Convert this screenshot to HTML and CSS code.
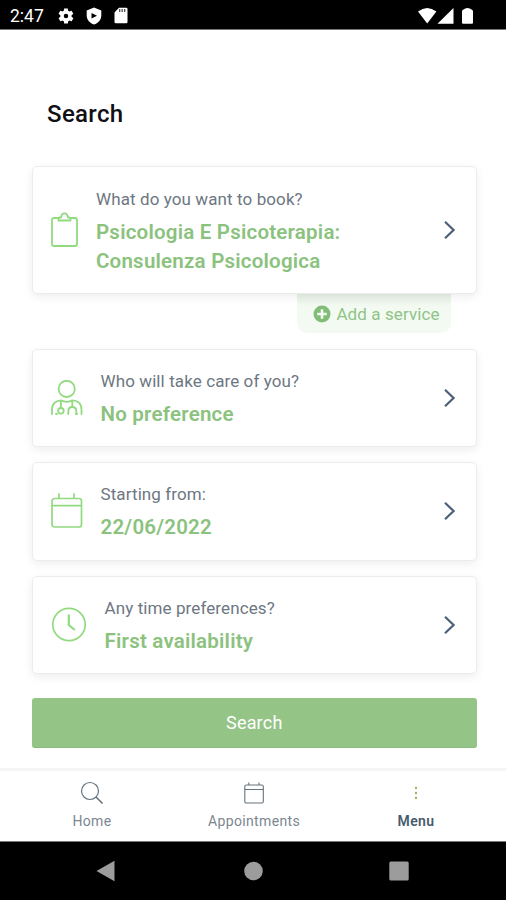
FILE: index.html
```html
<!DOCTYPE html>
<html lang="en">
<head>
<meta charset="utf-8">
<title>Search</title>
<link rel="stylesheet" href="styles.css">
</head>
<body>
<div class="phone">
  <header class="status">
    <span class="clock">2:47</span>
    <svg class="s-gear" width="18" height="18" viewBox="0 0 24 24"><path fill="#fff" fill-rule="evenodd" d="M19.4 13a7.500 7.500 0 0 0 0-2l2.100-1.600c.2-.2.3-.4.1-.7l-2-3.400c-.1-.2-.4-.3-.6-.2l-2.500 1a7 7 0 0 0-1.700-1L14.400 2.400c0-.2-.2-.4-.5-.4h-4c-.2 0-.4.2-.5.4L9 5.100a8 8 0 0 0-1.700 1l-2.500-1c-.2-.1-.5 0-.6.2l-2 3.400c-.1.3-.1.500.1.7L4.500 11a7.500 7.500 0 0 0 0 2l-2.100 1.600c-.2.2-.3.500-.1.700l2 3.400c.1.200.4.300.6.200l2.500-1a7 7 0 0 0 1.700 1l.4 2.700c0 .2.200.4.500.4h4c.2 0 .5-.2.500-.4l.4-2.700a8 8 0 0 0 1.700-1l2.500 1c.2.100.5 0 .6-.2l2-3.400c.1-.2.1-.5-.1-.7zM12 15a3 3 0 1 1 0-6 3 3 0 0 1 0 6z"/></svg>
    <svg class="s-shield" width="16" height="18" viewBox="0 0 16 18"><path fill="#fff" d="M8 .5 15.300 3.400V8.500C15.300 12.800 12 16.300 8 17.500 4 16.300.7 12.800.7 8.500V3.400z"/><path d="M5.500 6 11 8.700 5.500 11.400z"/></svg>
    <svg class="s-card" width="14" height="17" viewBox="0 0 14 17"><path fill="#fff" d="M5 .8h7.200q1.300 0 1.300 1.300v12.800q0 1.300-1.300 1.300H1.800Q.5 16.200.5 14.900V5.500z"/><path stroke="#555" stroke-width="1.300" d="M5.700 2v3M8.200 2v3M10.700 2v3"/></svg>
    <span class="grow"></span>
    <svg class="s-net" width="56" height="18" viewBox="0 0 56 18"><g fill="#fff"><path d="M0 4.500Q9.200-2.500 18.400 4.500L9.200 16.500z"/><path d="M35.500 1v15.800H19.500z"/><path d="M44 4.500q0-1.500 1.500-2Q47 1 49.500 1T53.500 2.500q1.500.5 1.500 2v11.200q0 1-1 1h-9q-1 0-1-1z"/></g></svg>
  </header>

  <main class="content">
    <h1 class="title">Search</h1>

    <section class="card card-tall">
      <svg class="icon" width="28" height="36" viewBox="0 0 28 36"><g fill="none" stroke="#92da80" stroke-width="1.800" stroke-linejoin="round"><path d="M7 6H3Q1 6 1 8v24q0 2 2 2h21q2 0 2-2V8q0-2-2-2h-4"/><path d="M7.500 8.500V6.500q0-1 1-1h1.700C10.500 0 16.500 0 16.800 5.500h1.700q1 0 1 1v2z"/></g></svg>
      <div class="text text-1">
        <p class="label">What do you want to book?</p>
        <p class="value">Psicologia E Psicoterapia:<br>Consulenza Psicologica</p>
      </div>
      <svg class="chevron" width="13" height="20" viewBox="0 0 13 20"><path d="M2 1.800 10.600 10 2 18.200"/></svg>
    </section>
    <div class="add">
      <svg width="18" height="18" viewBox="0 0 18 18"><circle cx="9" cy="9" r="8.500" fill="#82bd78"/><path d="M9 4.200v9.600M4.200 9h9.600" stroke="#f4faf3" stroke-width="2.600"/></svg>
      <span>Add a service</span>
    </div>

    <section class="card">
      <svg class="icon" width="32" height="36" viewBox="0 0 32 36"><g fill="none" stroke="#92da80" stroke-width="1.800" stroke-linecap="round"><circle cx="15.700" cy="8.900" r="8.100"/><path d="M1 34V29.500C1 23.500 5.500 20.300 10 20.300 13 22.500 18.500 22.500 21.500 20.300 26.500 20.300 30.500 23.500 30.500 29.500V34M26 34H25M5 34H6"/><path d="M9.900 21v7M21.300 21v6M17.300 34V31.500q0-4.500 4-4.500t4 4.500v2.500"/><circle cx="9.900" cy="30.800" r="2.800"/></g></svg>
      <div class="text text-2">
        <p class="label">Who will take care of you?</p>
        <p class="value">No preference</p>
      </div>
      <svg class="chevron" width="13" height="20" viewBox="0 0 13 20"><path d="M2 1.800 10.600 10 2 18.200"/></svg>
    </section>

    <section class="card">
      <svg class="icon" width="32" height="36" viewBox="0 0 32 36"><g fill="none" stroke="#92da80" stroke-width="1.700"><rect x="1" y="5.500" width="29.500" height="28.500" rx="2.500"/><path d="M1 12.700h29.500M8 .300V5.500M23 .300V5.500"/></g></svg>
      <div class="text text-2">
        <p class="label">Starting from:</p>
        <p class="value">22/06/2022</p>
      </div>
      <svg class="chevron" width="13" height="20" viewBox="0 0 13 20"><path d="M2 1.800 10.600 10 2 18.200"/></svg>
    </section>

    <section class="card">
      <svg class="icon" width="36" height="36" viewBox="0 0 36 36"><g fill="none" stroke="#92da80" stroke-width="1.700"><circle cx="18" cy="17.500" r="16.200"/><path stroke-width="2.200" d="M17.800 7.500v10.500l6 5"/></g></svg>
      <div class="text text-3">
        <p class="label">Any time preferences?</p>
        <p class="value">First availability</p>
      </div>
      <svg class="chevron" width="13" height="20" viewBox="0 0 13 20"><path d="M2 1.800 10.600 10 2 18.200"/></svg>
    </section>

    <button class="submit">Search</button>
  </main>

  <nav class="tabs">
    <div class="tab">
      <svg width="24" height="24" viewBox="0 0 24 24"><g fill="none" stroke="#66737d" stroke-width="1.200"><circle cx="10" cy="10" r="8.500"/><path stroke-width="1.600" d="M16 16l6.500 6.500"/></g></svg>
      <span>Home</span>
    </div>
    <div class="tab">
      <svg width="24" height="24" viewBox="0 0 24 24"><g fill="none" stroke="#66737d" stroke-width="1.100"><rect x="2.800" y="4" width="18.500" height="18" rx="1.500"/><path d="M2.800 8.500h18.500M6.800 1.500V4M17 1.500V4"/></g></svg>
      <span>Appointments</span>
    </div>
    <div class="tab active">
      <svg width="24" height="24" viewBox="0 0 24 24"><g fill="#a3ab5d"><circle cx="12" cy="7" r="1.150"/><circle cx="12" cy="12" r="1.150"/><circle cx="12" cy="17" r="1.150"/></g></svg>
      <span>Menu</span>
    </div>
  </nav>

  <footer class="sysnav">
    <svg width="20" height="22" viewBox="0 0 20 22"><path fill="#9c9c9c" d="M18.500.8v20.400L.5 11z"/></svg>
    <svg width="20" height="20" viewBox="0 0 20 20"><circle cx="10.500" cy="10" r="9.300" fill="#9c9c9c"/></svg>
    <svg width="20" height="20" viewBox="0 0 20 20"><rect x=".3" y=".5" width="19.400" height="19" rx="1.500" fill="#9c9c9c"/></svg>
  </footer>
</div>
</body>
</html>
```

FILE: styles.css
```css
* { box-sizing: border-box; }
body { margin: 0; background: #fff; font-family: Roboto, "Liberation Sans", sans-serif; }
h1, p { margin: 0; font-weight: inherit; }
svg { display: block; flex: none; }
.phone { width: 506px; height: 900px; display: flex; flex-direction: column; overflow: hidden; }
.status { height: 30px; flex: none; background: #000; border-bottom: 1px solid #777; display: flex; align-items: center; padding: 2px 32px 0 10px; color: #fff; }
.clock { font-size: 17.500px; width: 47px; line-height: 20px; white-space: nowrap; }
.s-shield { margin-left: 11px; }
.s-card { margin-left: 12px; }
.grow { flex: 1; }
.content { flex: 1; padding: 0 29.500px 0 32px; display: flex; flex-direction: column; }
.title { margin: 69px 0 0 15px; height: 30px; line-height: 30px; font-size: 24px; letter-spacing: .35px; font-weight: 500; color: #101116; white-space: nowrap; }
.card { position: relative; height: 98.500px; flex: none; margin-bottom: 15px; padding: 0 20px 0 18px; display: flex; align-items: center; border: 1px solid #ececec; border-radius: 5px; background: #fff; box-shadow: 0 3px 10px rgba(0, 0, 0, .07); }
.card-tall { height: 128px; margin: 37px 0 0; z-index: 1; }
.text { flex: 1; white-space: nowrap; padding-top: 3px; }
.text-1 { margin-left: 17px; }
.text-2 { margin-left: 17.500px; }
.text-3 { margin-left: 17.500px; }
.label { font-size: 17px; letter-spacing: .1px; line-height: 24px; color: #6d7782; margin: -1px 0 7px; }
.value { font-size: 20.500px; letter-spacing: .22px; line-height: 29px; font-weight: 600; color: #8bc27e; }
.chevron path { fill: none; stroke: #4b6078; stroke-width: 2.200; }
.add { align-self: flex-end; width: 154px; height: 39px; margin: 0 25.500px 15.500px 0; padding-left: 5px; border-radius: 0 0 10px 10px; background: linear-gradient(#e7f1e5, #f3faf2 35%); display: flex; align-items: center; justify-content: center; gap: 5px; color: #8fc486; font-size: 17px; letter-spacing: .1px; white-space: nowrap; }
.submit { height: 50px; flex: none; margin-top: 9px; padding: 1px 0 0; border: 0; border-radius: 3px; background: #95c487; border-bottom: 1px solid #8abb7c; color: #fff; font: 400 18px/48px Roboto, sans-serif; letter-spacing: .2px; }
.tabs { height: 73px; flex: none; border-top: 3px solid #f5f5f5; display: flex; padding: 0 9px 0 11px; background: #fff; }
.tab { flex: 1; display: flex; flex-direction: column; align-items: center; padding-top: 10px; gap: 7px; font-size: 14px; letter-spacing: .35px; line-height: 18px; color: #7c8790; }
.active { color: #485b6b; font-weight: 600; }
.sysnav { height: 59px; flex: none; background: #000; border-top: 1px solid #777; display: flex; align-items: center; justify-content: space-between; padding: 0 97px 0 96px; }
```
